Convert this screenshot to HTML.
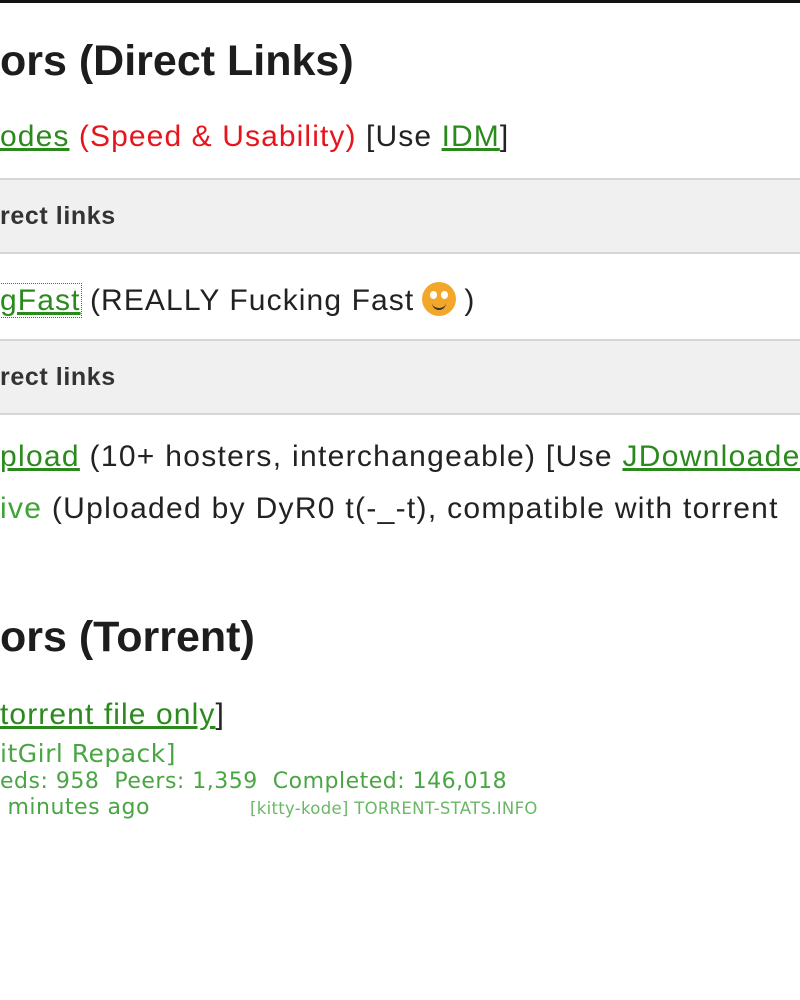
<!DOCTYPE html>
<html><head><style>
body{margin:0;width:800px;height:1000px;overflow:hidden;background:#fff;font-family:"Liberation Sans",sans-serif;color:#222;position:relative}
.top{position:absolute;left:0;top:0;width:800px;height:3px;background:#111}
.t{position:absolute;left:0;white-space:nowrap;font-size:30px;letter-spacing:1.3px;line-height:1}
h1{position:absolute;left:0;margin:0;font-size:43px;font-weight:bold;letter-spacing:0;white-space:nowrap;line-height:1;color:#1d1d1d}
a{color:#2a8a1c;text-decoration:underline}
.red{color:#e8141c}
.g{color:#3fa335}
.bar{position:absolute;left:0;width:800px;background:#f0f0f0;border-top:2px solid #d6d6d6;border-bottom:2px solid #d6d6d6}
.bar span{position:absolute;left:0;font-size:25px;font-weight:bold;letter-spacing:0.6px;color:#333}
.ts{position:absolute;left:0;white-space:nowrap;color:#4aa544;font-family:"DejaVu Sans",sans-serif;line-height:1}
.smile{display:inline-block;width:34px;height:34px;border-radius:50%;background:#f3a72a;vertical-align:-6px;position:relative;margin:0 8px}
.smile:before,.smile:after{content:"";position:absolute;top:9px;width:7px;height:8px;background:#fff;border-radius:50%}
.smile:before{left:8px}.smile:after{left:19px}
.smile i{position:absolute;left:10px;top:20px;width:14px;height:6px;border-bottom:2px solid #333;border-radius:0 0 8px 8px}
</style></head><body>
<div class="top"></div>
<h1 style="top:40px">ors (Direct Links)</h1>
<div class="t" style="top:122px;letter-spacing:1.1px"><a>odes</a> <span class="red">(Speed &amp; Usability)</span> [Use <a>IDM</a>]</div>
<div class="bar" style="top:178px;height:72px"><span style="top:22px">rect links</span></div>
<div class="t" style="top:282px;letter-spacing:1.1px"><a style="outline:1px dotted #2a8a1c">gFast</a> (REALLY Fucking Fast<span class="smile"><i></i></span>)</div>
<div class="bar" style="top:339px;height:72px"><span style="top:22px">rect links</span></div>
<div class="t" style="top:442px"><a>pload</a> (10+ hosters, interchangeable) [Use <a>JDownloader</a></div>
<div class="t" style="top:494px"><span class="g">ive</span> (Uploaded by DyR0 t(-_-t), compatible with torrent</div>
<h1 style="top:616px">ors (Torrent)</h1>
<div class="t" style="top:700px;letter-spacing:1.1px"><a>torrent file only</a>]</div>
<div class="ts" style="top:741px;font-size:25px;letter-spacing:0.5px">itGirl Repack]</div>
<div class="ts" style="top:771px;font-size:22px;letter-spacing:0.5px">eds: 958&nbsp; Peers: 1,359&nbsp; Completed: 146,018</div>
<div class="ts" style="top:797px;font-size:22px;letter-spacing:0.5px">&nbsp;minutes ago</div>
<div class="ts" style="top:801px;left:250px;font-size:16.5px;letter-spacing:0.3px;color:#6ab865">[kitty-kode] TORRENT-STATS.INFO</div>
</body></html>
